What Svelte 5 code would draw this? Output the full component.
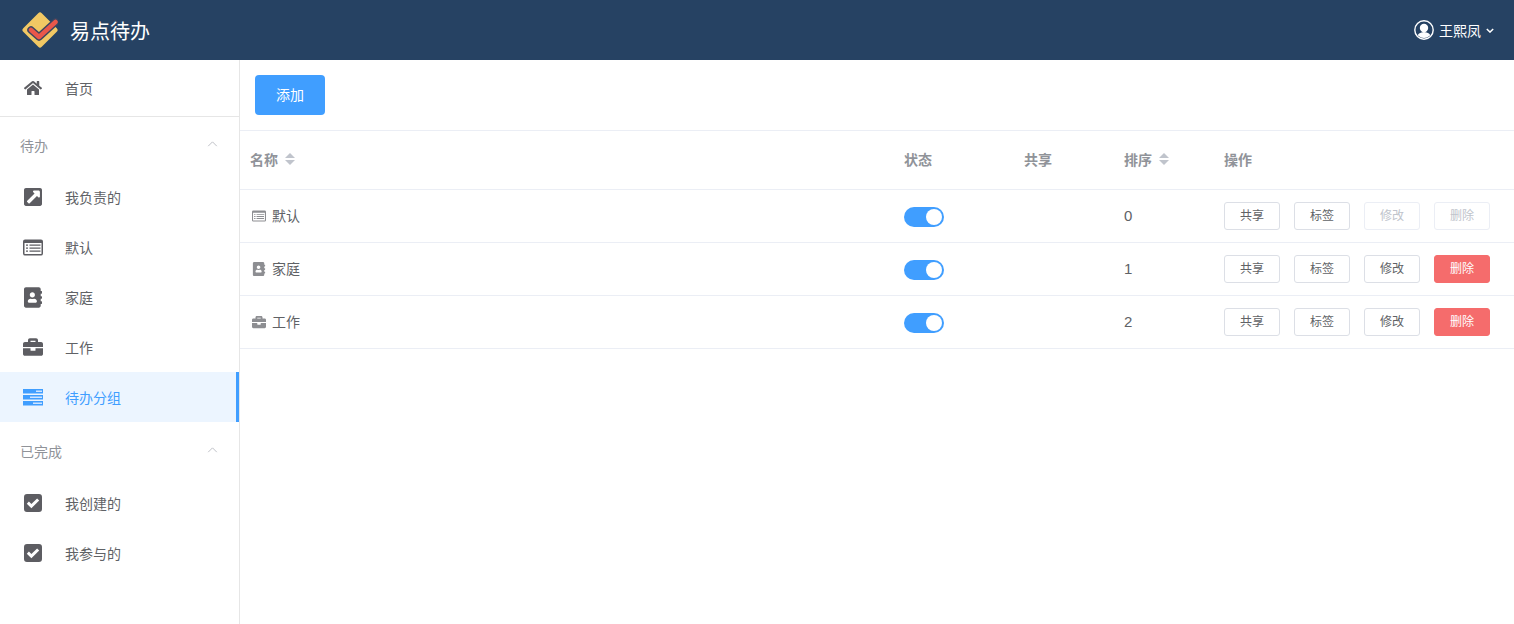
<script>
  const icons = {
    home: { vb: '0 0 576 512', d: 'M280.37 148.26L96 300.11V464a16 16 0 0 0 16 16l112.06-.29a16 16 0 0 0 15.92-16V368a16 16 0 0 1 16-16h64a16 16 0 0 1 16 16v95.64a16 16 0 0 0 16 16.05L464 480a16 16 0 0 0 16-16V300L295.67 148.26a12.19 12.19 0 0 0-15.3 0zM571.6 251.47L488 182.56V44.05a12 12 0 0 0-12-12h-56a12 12 0 0 0-12 12v72.61L318.47 43a48 48 0 0 0-61 0L4.34 251.47a12 12 0 0 0-1.6 16.9l25.5 31A12 12 0 0 0 45.15 301l235.22-193.74a12.19 12.19 0 0 1 15.3 0L530.9 301a12 12 0 0 0 16.9-1.6l25.5-31a12 12 0 0 0-1.7-16.93z' },
    ext: { vb: '0 0 448 448', d: 'M448 48v352c0 26.51-21.49 48-48 48H48c-26.51 0-48-21.49-48-48V48C0 21.49 21.49 0 48 0h352c26.51 0 48 21.49 48 48zm-88 16H248.03c-21.36 0-32.09 25.9-16.97 40.97l32 32L75.51 324.53c-4.69 4.69-4.69 12.28 0 16.97l43 43c4.69 4.69 12.28 4.69 16.97 0L323.03 196.94l32 32c15 15 40.97 4.46 40.97-16.97V100c0-19.88-16.12-36-36-36z' },
    list: { vb: '0 0 20 16', d: 'M2 0h16a2 2 0 0 1 2 2v12a2 2 0 0 1-2 2H2a2 2 0 0 1-2-2V2a2 2 0 0 1 2-2zM1.500 3.500V14a.5.5 0 0 0 .5.5h16a.5.5 0 0 0 .5-.5V3.500zM6.500 5h11v1.300h-11zM6.500 8h11v1.300h-11zM6.500 11h11v1.300h-11zM3 5h2v1.300H3zM3 8h2v1.300H3zM3 11h2v1.300H3z' },
    book: { vb: '0 0 448 512', d: 'M436 160c6.6 0 12-5.4 12-12v-40c0-6.6-5.4-12-12-12h-20V48c0-26.5-21.5-48-48-48H48C21.5 0 0 21.5 0 48v416c0 26.5 21.5 48 48 48h320c26.5 0 48-21.5 48-48v-48h20c6.6 0 12-5.4 12-12v-40c0-6.6-5.4-12-12-12h-20v-64h20c6.6 0 12-5.4 12-12v-40c0-6.6-5.4-12-12-12h-20v-64h20zm-228-32c35.3 0 64 28.7 64 64s-28.7 64-64 64-64-28.7-64-64 28.7-64 64-64zm112 236.8c0 10.600-10 19.200-22.400 19.200H118.400C106 384 96 375.400 96 364.800v-19.200c0-31.800 30.100-57.600 67.200-57.600h5c12.300 5.100 25.700 8 39.800 8s27.600-2.900 39.800-8h5c37.100 0 67.200 25.800 67.200 57.600v19.200z' },
    case: { vb: '0 0 512 448', d: 'M320 304c0 8.840-7.160 16-16 16h-96c-8.840 0-16-7.160-16-16v-48H0v144c0 25.600 22.400 48 48 48h416c25.600 0 48-22.400 48-48V256H320v48zm144-208h-80V48c0-25.600-22.400-48-48-48H176c-25.600 0-48 22.400-48 48v48H48C22.400 96 0 118.400 0 144v80h512v-80c0-25.600-22.400-48-48-48zm-144 0H192V64h128v32z' },
    check: { vb: '0 0 18 18', d: 'M3 0h12a3 3 0 0 1 3 3v12a3 3 0 0 1-3 3H3a3 3 0 0 1-3-3V3a3 3 0 0 1 3-3zM7.400 14.300L15.200 6.500 13.100 4.400 7.400 10.100 4.900 7.600 2.800 9.700z' },
    groups: { vb: '0 0 20 17', d: 'M0 0h20v4.500H0zM0 6h20v4.500H0zM0 12h20v4.500H0z' }
  };
  const topNav = [
    { label: '我负责的', icon: 'ext', size: 'sq' },
    { label: '默认', icon: 'list', size: 'lst' },
    { label: '家庭', icon: 'book', size: 'tall' },
    { label: '工作', icon: 'case', size: 'brief' }
  ];
  const doneNav = [
    { label: '我创建的', icon: 'check', size: 'sq' },
    { label: '我参与的', icon: 'check', size: 'sq' }
  ];
  const rows = [
    { name: '默认', icon: 'list', order: 0, locked: true },
    { name: '家庭', icon: 'book', order: 1, locked: false },
    { name: '工作', icon: 'case', order: 2, locked: false }
  ];
</script>

{#snippet fa(name, cls)}
  <svg class={cls} viewBox={icons[name].vb} aria-hidden="true"><path fill-rule="evenodd" d={icons[name].d} /></svg>
{/snippet}

{#snippet sort()}
  <span class="sort"><i class="up"></i><i class="down"></i></span>
{/snippet}

{#snippet chevron()}
  <svg class="chev" viewBox="0 0 12 7" aria-hidden="true"><path d="M1 6l5-5 5 5" /></svg>
{/snippet}

{#snippet navItem(item)}
  <a class="item" href="#/">
    <span class="ico">{@render fa(item.icon, item.size)}</span>
    <span>{item.label}</span>
  </a>
{/snippet}

<div class="page">
  <header class="top">
    <div class="brand">
      <svg class="logo" viewBox="0 0 36 36" aria-hidden="true">
        <path d="M18 3L33 18 18 33 3 18z" fill="#f1c864" stroke="#f1c864" stroke-width="5" stroke-linejoin="round" />
        <path d="M9 18L17 25 33.500 10" fill="none" stroke="#3a4560" stroke-width="7.500" stroke-linecap="round" stroke-linejoin="round" />
        <path d="M9 18L17 25 33.500 10" fill="none" stroke="#e9574a" stroke-width="4.500" stroke-linecap="round" stroke-linejoin="round" />
      </svg>
      <span class="title">易点待办</span>
    </div>
    <div class="user">
      <svg class="avatar" viewBox="0 0 20 20" aria-hidden="true">
        <defs><clipPath id="av"><circle cx="10" cy="10" r="8" /></clipPath></defs>
        <circle cx="10" cy="10" r="9.200" fill="none" stroke="#fff" stroke-width="1.400" />
        <g clip-path="url(#av)" fill="#fff">
          <circle cx="10" cy="8" r="4.200" />
          <ellipse cx="10" cy="17.500" rx="7" ry="5.500" />
        </g>
      </svg>
      <span>王熙凤</span>
      <svg class="caret" viewBox="0 0 10 6" aria-hidden="true"><path d="M1 1l4 4 4-4" /></svg>
    </div>
  </header>

  <div class="body">
    <aside class="side">
      <a class="item hm" href="#/">
        <span class="ico">{@render fa('home', 'hm-ic')}</span>
        <span>首页</span>
      </a>
      <div class="group">待办 {@render chevron()}</div>
      {#each topNav as item}
        {@render navItem(item)}
      {/each}
      <a class="item active" href="#/">
        <span class="ico">
          <svg class="lst" viewBox="0 0 20 17" aria-hidden="true">
            <path d={icons.groups.d} />
            <path class="notch" d="M13 1.500h6V3h-6zM7 7.500h12V9H7zM10 13.500h9V15h-9z" />
          </svg>
        </span>
        <span>待办分组</span>
      </a>
      <div class="group">已完成 {@render chevron()}</div>
      {#each doneNav as item}
        {@render navItem(item)}
      {/each}
    </aside>

    <main class="main">
      <div class="toolbar"><button class="add"><span>添加</span></button></div>
      <table>
        <colgroup>
          <col class="c-name" /><col class="c-state" /><col class="c-share" /><col class="c-order" /><col class="c-ops" />
        </colgroup>
        <thead>
          <tr>
            <th><span class="head">名称{@render sort()}</span></th>
            <th>状态</th>
            <th>共享</th>
            <th><span class="head">排序{@render sort()}</span></th>
            <th>操作</th>
          </tr>
        </thead>
        <tbody>
          {#each rows as row}
            <tr>
              <td><span class="name">{@render fa(row.icon, 'mini')}<span class="name-text">{row.name}</span></span></td>
              <td><span class="switch"><i></i></span></td>
              <td></td>
              <td class="num">{row.order}</td>
              <td class="ops">
                <button class="btn"><span>共享</span></button>
                <button class="btn"><span>标签</span></button>
                <button class="btn" class:off={row.locked}><span>修改</span></button>
                <button class="btn" class:off={row.locked} class:danger={!row.locked}><span>删除</span></button>
              </td>
            </tr>
          {/each}
        </tbody>
      </table>
    </main>
  </div>
</div>

<style>
  :global(body) {
    margin: 0;
    background: #fff;
    font-family: "Liberation Sans", "Noto Sans CJK SC", sans-serif;
    font-size: 14px;
    color: #606266;
  }
  .page { height: 624px; overflow: hidden; display: flex; flex-direction: column; }
  .top {
    height: 60px; flex: none; background: #264263; color: #fff;
    display: flex; align-items: center; justify-content: space-between;
    padding: 0 20px 0 22px;
  }
  .brand { display: flex; align-items: center; gap: 12px; }
  .logo { width: 36px; height: 36px; }
  .title { font-size: 20px; }
  .user { display: flex; align-items: center; font-size: 14px; }
  .avatar { width: 20px; height: 20px; margin-right: 5px; }
  .caret { width: 8px; height: 5px; margin-left: 5px; fill: none; stroke: #fff; stroke-width: 1.800; }
  .body { flex: 1; display: flex; min-height: 0; }
  .side { width: 239px; flex: none; border-right: 1px solid #e6e6e6; }
  .item {
    height: 50px; display: flex; align-items: center; color: #606266; text-decoration: none;
  }
  .ico {
    width: 66px; flex: none; box-sizing: border-box;
    display: flex; justify-content: center; margin-right: -1px;
  }
  .ico svg { fill: #5d5d62; }
  .lst { width: 20px; height: 17px; }
  .sq { width: 18px; height: 18px; }
  .tall { width: 18px; height: 21px; }
  .brief { width: 20px; height: 18px; }
  .hm-ic { width: 18px; height: 16px; }
  .hm { height: 56px; box-shadow: 0 1px 0 #e6e6e6; }
  .group {
    height: 56px; padding: 2px 21px 0 20px; box-sizing: border-box;
    display: flex; align-items: center; justify-content: space-between;
    color: #909399;
  }
  .chev { width: 11px; height: 6px; fill: none; stroke: #b4b7bd; stroke-width: 1; margin-top: -3px; }
  .active { background: #ecf5ff; color: #409eff; box-shadow: inset -3px 0 0 #409eff; }
  .active .ico svg { fill: #409eff; }
  .active .ico .notch { fill: #cfe4ff; }
  .main { flex: 1; min-width: 0; }
  .toolbar { height: 71px; padding: 15px; box-sizing: border-box; border-bottom: 1px solid #ebeef5; }
  .add {
    width: 70px; height: 40px; border: 0; border-radius: 4px; background: #409eff; color: #fff;
    font: inherit; padding: 0 0 2px;
  }
  table { width: 100%; border-collapse: collapse; table-layout: fixed; }
  .c-name { width: 654px; }
  .c-state { width: 120px; }
  .c-share { width: 100px; }
  .c-order { width: 100px; }
  th {
    height: 58px; padding: 0 10px 1px; text-align: left; color: #909399; font-weight: 700; font-size: 14px;
    border-bottom: 1px solid #ebeef5; box-sizing: border-box;
  }
  td {
    height: 53px; padding: 0 10px; box-sizing: border-box; border-bottom: 1px solid #ebeef5;
  }
  .head { display: flex; align-items: center; margin-top: -1px; }
  .name { display: flex; align-items: center; gap: 6px; margin-left: 2px; }
  .name-text { margin-top: -1px; }
  .mini { width: 14px; height: 14px; fill: #8d8e92; }
  .sort { display: inline-flex; flex-direction: column; gap: 2px; margin-left: 7px; }
  .sort i { width: 0; height: 0; border-left: 5px solid transparent; border-right: 5px solid transparent; }
  .sort .up { border-bottom: 5px solid #c0c4cc; }
  .sort .down { border-top: 5px solid #c0c4cc; }
  .switch {
    display: block; width: 40px; height: 20px; margin-top: 2px; border-radius: 10px; background: #409eff; position: relative;
  }
  .switch i {
    position: absolute; top: 2px; right: 2px; width: 16px; height: 16px; border-radius: 50%; background: #fff;
  }
  .num { font-size: 15px; }
  .ops { white-space: nowrap; }
  .btn {
    width: 56px; height: 28px; padding: 0 0 2px; border: 1px solid #dcdfe6; border-radius: 3px;
    background: #fff; color: #606266; font: inherit; font-size: 12px; margin-right: 14px; float: left;
  }
  .btn.off { color: #c0c4cc; border-color: #ebeef5; }
  .btn.danger { background: #f56c6c; border-color: #f56c6c; color: #fff; }
</style>
